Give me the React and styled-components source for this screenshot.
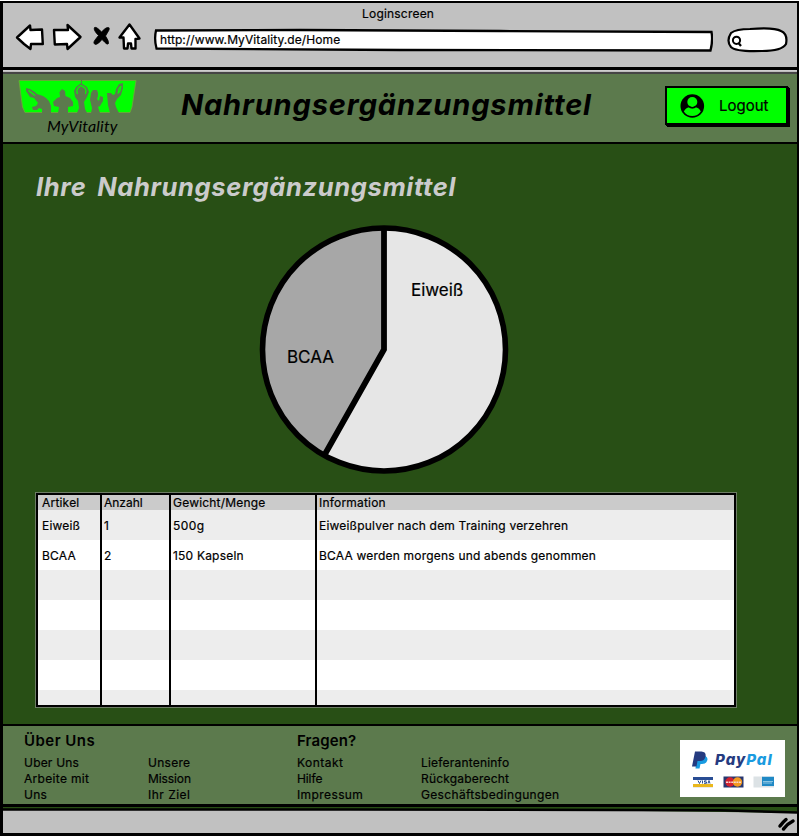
import React from 'react';
import styled, { createGlobalStyle } from 'styled-components';

const GlobalStyle = createGlobalStyle`
  * { box-sizing: border-box; }
  body { margin: 0; background: #fff; font-family: Inter, "Open Sans", sans-serif; color: #000; }
  svg { display: block; }
`;

const Window = styled.div`
  width: 799px;
  height: 835px;
  margin-top: 1px;
  display: flex;
  flex-direction: column;
  border: solid #000;
  border-width: 2px 2px 3px 3px;
`;

const Label = styled.span`
  font-size: ${(p) => p.$size || 12}px;
  font-weight: 400;
  letter-spacing: ${(p) => p.$ls ?? 0.2}px;
  line-height: 16px;
  white-space: pre;
  -webkit-text-stroke: 0.2px currentColor;
`;

const Chrome = styled.header`
  flex: 0 0 67px;
  background: #c1c1c1;
  border-bottom: 3px solid #000;
`;

const WindowTitle = styled.div`
  height: 18px;
  padding: 3px 0 0 359px;
  display: flex;
`;

const Toolbar = styled.div`
  height: 42px;
  padding-left: 12px;
  display: flex;
`;

const AddressBar = styled.div`
  position: relative;
  width: 560px;
  height: 24px;
  margin: 7px 0 0 9px;
  padding: 4px 0 0 7px;
  display: flex;
`;

const BarOutline = styled.svg`
  position: absolute;
  inset: 0;
`;

const AddressText = styled(Label)`
  position: relative;
`;

const SearchField = styled.svg`
  margin: 5px 0 0 14px;
`;

const Gap = styled.div`
  flex: 0 0 2px;
  background: linear-gradient(#cfcfcf 1px, #bdbdbd 1px);
`;

const Brand = styled.div`
  flex: 0 0 72px;
  display: flex;
  background: #5c7a4d;
  border-top: 2px solid #454545;
  border-bottom: 2px solid #000;
  padding: 0 9px 0 15px;
`;

const Logo = styled.div`
  width: 120px;
  padding-top: 5px;
`;

const LogoName = styled.div`
  font-family: Lato, sans-serif;
  font-size: 16px;
  font-style: italic;
  line-height: 18px;
  letter-spacing: 0.15px;
  padding-left: 29px;
  margin-top: 3px;
`;

const Title = styled.h1`
  margin: ${(p) => p.$margin};
  font-size: ${(p) => p.$size}px;
  line-height: 36px;
  font-style: italic;
  font-weight: 700;
  letter-spacing: ${(p) => p.$ls}px;
  word-spacing: ${(p) => p.$ws || 0}px;
  color: ${(p) => p.$color || '#000'};
  white-space: nowrap;
`;

const LogoutButton = styled.button`
  width: 123px;
  height: 39px;
  margin: 12px 0 0 auto;
  padding: 0 0 0 13px;
  display: flex;
  align-items: center;
  gap: 14px;
  background: #00ff00;
  border: 2px solid #000;
  box-shadow: 1px 1px #000, 2px 2px #000;
  font-family: inherit;
  color: #000;
`;

const Content = styled.main`
  flex: 0 0 580px;
  background: #284f15;
  padding: 25px 0 0 33px;
`;

const ChartArea = styled.div`
  position: relative;
  width: 252px;
  height: 252px;
  margin: 18px 0 0 222px;
`;

const SliceLabel = styled(Label)`
  position: absolute;
  left: ${(p) => p.$x}px;
  top: ${(p) => p.$y}px;
`;

const Table = styled.div`
  position: relative;
  width: 702px;
  height: 216px;
  margin: 17px 0 0 -1px;
  border: 1px solid #6d7c65;
  box-shadow: inset 0 0 0 2px #000;
  padding: 2px;
  background: repeating-linear-gradient(#ededed 0 30px, #fff 30px 60px) 0 17px;
`;

const Row = styled.div`
  display: grid;
  grid-template-columns: 62px 69px 146px 1fr;
  align-items: ${(p) => (p.$head ? 'start' : 'center')};
  height: ${(p) => (p.$head ? 15 : 30)}px;
  padding: ${(p) => (p.$head ? 0 : 2)}px 0 0 4px;
  background: ${(p) => (p.$head ? '#cbcbcb' : 'transparent')};
`;

const Divider = styled.i`
  position: absolute;
  top: 2px;
  bottom: 1px;
  left: ${(p) => p.$x}px;
  width: 2px;
  background: #000;
`;

const Footer = styled.footer`
  flex: 0 0 83px;
  background: #5c7a4d;
  border-top: 2px solid #000;
  border-bottom: 3px solid #000;
  padding: 6px 12px 0 21px;
  display: flex;
`;

const LinkGroup = styled.section`
  width: 273px;
  padding-top: 1px;
`;

const LinkColumns = styled.div`
  display: grid;
  grid-template-columns: 124px auto;
  margin-top: 6px;
`;

const LinkList = styled.div`
  display: flex;
  flex-direction: column;
`;

const Heading = styled.h2`
  margin: 0;
  font-size: 15px;
  font-weight: 600;
  line-height: 16px;
  letter-spacing: ${(p) => p.$ls}px;
`;

const PaymentBox = styled.div`
  width: 105px;
  height: 57px;
  margin: 8px 0 0 auto;
  padding: 10px 0 0 12px;
  background: #fff;
`;

const PayPalRow = styled.div`
  display: flex;
  align-items: center;
  height: 19px;
  margin-bottom: 7px;
`;

const PayPalName = styled.div`
  font: italic 800 15px/20px Inter, sans-serif;
  letter-spacing: 1px;
  color: #253b80;
  padding: 1px 0 0 7px;
  span { color: #1a9be0; }
`;

const Strip = styled.div`
  flex: 0 0 26px;
  background: #284f15;
  display: flex;
`;

const Arrow = ({ d }) => <path d={d} fill="#fff" stroke="#000" strokeWidth="2.4" strokeLinejoin="round" />;

const NavIcons = () => (
  <svg width="129" height="34" viewBox="15 21 129 34">
    <Arrow d="M17 37.5 30 25.5 30.5 30 42 29.5 42.8 44 31 44 30.5 49 24 44Z" />
    <Arrow d="M54 30 68 30 67.5 25 80.5 37 67.5 49 67 44 54.8 44.5Z" />
    <path d="M94.500 27.500Q93 30 98.500 35.500L95 40Q92.500 43.500 95.500 44.500Q98 44.500 102 39.500L104.500 42Q107.500 45.500 108.500 43.500Q109 41 105.500 36L109 30Q110 27 107.500 27.500Q105.500 27.500 101.500 32Q96.500 26.500 94.500 27.500Z" fill="#000" stroke="#000" strokeWidth="0.8" />
    <Arrow d="M129.500 24.500 119.500 37.500 123.500 37.500 124 48.500 127.500 48.500 128 43.500 131 43.500 131.500 48.500 135.500 48.500 135.500 39 139.500 38.500Z" />
  </svg>
);

const LogoArt = () => (
  <svg width="120" height="35" viewBox="18 79 120 35">
    <path d="M19 80.500H136L132 107 130 112.500H25L22.500 107Z" fill="#00ff00" stroke="#71a63b" strokeWidth="0.8" />
    <g fill="#5c7a4d">
      <path d="M42 113 42 109 39 108 37 110 33 110 32 107 36 106 38 103 34 98 30 97 26 91 26 88 30 89 35 92 37 94 40 95 43 96 46 98 49 101 51 106 51 113Z" />
      <path d="M58 113 59 107 54 106 53 102 57 98 60 97 59.500 92 62 89 65 91 65.500 96 70 98 73 102 73 106 68 107 68 113Z" />
      <path d="M77 113 79 108 78 101 75 97 74 91 76 87 81 83 87 87 89 92 87 97 84 102 85 109 87 113Z" />
      <path d="M91 113 92 108 90 100 91 93 93 90 97 90 98 93 98 96 97 99 99 101 100 96 103 97 103 101 100 106 98 107 100 113Z" />
      <path d="M107 93 111 93 113 95 115 94 116 89 119 84 123 83 123 88 121 95 117 99 115 103 116 107 119 113 110 113 108 105Z" />
    </g>
    <path d="M28.500 90.500 35 95.500M77.500 94Q76 91 78 88L81 85.500 85 88Q87 91 85 94M118 93.500 119 88.500 121 86 120 91Z" fill="none" stroke="#00ff00" strokeWidth="1.200" />
    <circle cx="81.500" cy="93.500" r="3.500" fill="#5c7a4d" />
    <path d="M81.500 80V84" stroke="#5c7a4d" />
  </svg>
);

const UserIcon = () => (
  <svg width="25" height="24" viewBox="0 0 25 24">
    <circle cx="12.300" cy="12" r="11.800" />
    <circle cx="12.300" cy="8" r="5" fill="#0f0" />
    <path d="M3.800 17.500Q6 13.500 9 13.200Q12.300 15.200 15.600 13.200Q19 13.500 20.800 17.500Q17.500 22 12.300 22Q7 22 3.800 17.500Z" fill="#0f0" />
    <path d="M8.500 12Q12.300 16 16.200 12" fill="none" stroke="#000" strokeWidth="1.200" />
  </svg>
);

const PieChart = () => (
  <svg width="252" height="252" viewBox="258 223 252 252">
    <circle cx="384" cy="349.500" r="121.500" fill="#e6e6e6" />
    <path d="M384 349.500V228A121.500 121.500 0 0 0 324.500 455Z" fill="#a7a7a7" />
    <path d="M384 228V349.500L324.500 455" fill="none" stroke="#000" strokeWidth="5.800" />
    <circle cx="384" cy="349.500" r="121.500" fill="none" stroke="#000" strokeWidth="5.600" />
  </svg>
);

const PayPalMark = () => (
  <svg width="16" height="18" viewBox="0 0 16 18">
    <path d="M5 5H13.500Q16.500 7 15 10Q14 13 10 13H8.500L7.500 17.500H3.500Z" fill="#189be1" />
    <path d="M3 .5H9.500Q14.500 1 13.500 5.500Q12.500 10 8 10H5.500L4.500 15.500H0Z" fill="#253b80" />
  </svg>
);

const Cards = () => (
  <svg width="83" height="12" viewBox="0 0 83 12">
    <path d="M1 1H21V11.500H1Z" fill="#d5d5d5" />
    <path d="M1 1H21V4H1Z" fill="#294d93" />
    <path d="M1 8H21V11H1Z" fill="#eab71c" />
    <path d="M1 4H21V8H1Z" fill="#fff" />
    <path d="M6 4.500 7.500 7.500 9 4.500M10.500 4.500V7.500M14.500 4.800H12.500V6H14.500V7.300H12M16 7.500 17 4.500 18 7.500" fill="none" stroke="#294d93" />
    <rect x="31.500" y=".5" width="20" height="11" fill="#28366f" />
    <circle cx="38" cy="6" r="4.700" fill="#d3202e" />
    <circle cx="45.500" cy="6" r="4.700" fill="#f39a20" />
    <path d="M34 6.300H49" stroke="#f6d5ce" strokeWidth="1.500" strokeDasharray="2 .6" />
    <rect x="61.500" y=".5" width="20.500" height="11" fill="#dce2e5" />
    <path d="M70 .8H82V10H70Z" fill="#2089c5" />
    <path d="M71 5.500H81M71 7H80" stroke="#a6d4ea" strokeWidth=".8" />
  </svg>
);

const Status = () => (
  <svg width="794" height="26" viewBox="3 807 794 26">
    <path d="M3 810H560L797 813V835H3Z" fill="#c1c1c1" />
    <path d="M3 809.500H350L720 810.200 797 812.500" fill="none" stroke="#000" strokeWidth="2.500" />
    <path d="M780 826Q783 822 786 819.500M783.500 829Q787 824 793 821" fill="none" stroke="#000" strokeWidth="3.500" strokeLinecap="round" />
  </svg>
);

const head = [['Artikel'], ['Anzahl', 0], ['Gewicht/Menge'], ['Information']];
const rows = [
  [['Eiweiß'], ['1'], ['500g', 0.4], ['Eiweißpulver nach dem Training verzehren']],
  [['BCAA'], ['2'], ['150 Kapseln'], ['BCAA werden morgens und abends genommen']],
];

const links = {
  about: [['Uber Uns'], ['Arbeite mit', 0.32], ['Uns', 0.3]],
  mission: [['Unsere', 0.26], ['Mission', -0.1], ['Ihr Ziel', 0.49]],
  help: [['Kontakt', 0.48], ['Hilfe', -0.1], ['Impressum', 0.4]],
  legal: [['Lieferanteninfo'], ['Rückgaberecht'], ['Geschäftsbedingungen', 0.33]],
};

const Cells = ({ items }) => items.map(([t, ls]) => <Label key={t} $ls={ls}>{t}</Label>);

const Links = ({ items }) => (
  <LinkList><Cells items={items} /></LinkList>
);

export default function App() {
  return (
    <>
      <GlobalStyle />
      <Window>
        <Chrome>
          <WindowTitle><Label>Loginscreen</Label></WindowTitle>
          <Toolbar>
            <NavIcons />
            <AddressBar>
              <BarOutline width="560" height="24" viewBox="153 29 560 24">
                <path d="M156 31.500 300 31 500 32 711.500 33Q713 42 710.500 51.500L400 51 156.500 49.500Q154 40 156 31.500Z" fill="#fff" stroke="#000" strokeWidth="2.300" />
              </BarOutline>
              <AddressText $ls={0.09}>http://www.MyVitality.de/Home</AddressText>
            </AddressBar>
            <SearchField width="62" height="28" viewBox="727 27 62 28">
              <path d="M731 34Q736 30 750 30Q774 28 781 32Q788 35 786 45Q782 52 762 52Q736 53 731 48Q726 42 731 34Z" fill="#fff" stroke="#000" strokeWidth="2.200" />
              <circle cx="736.500" cy="41.300" r="3.600" fill="none" stroke="#000" strokeWidth="2" />
              <path d="M738.500 44 741 47" stroke="#000" strokeWidth="2.200" />
            </SearchField>
          </Toolbar>
        </Chrome>
        <Gap />
        <Brand>
          <Logo>
            <LogoArt />
            <LogoName>MyVitality</LogoName>
          </Logo>
          <Title $size={29} $ls={0.85} $margin="13px 0 0 43px">Nahrungsergänzungsmittel</Title>
          <LogoutButton>
            <UserIcon />
            <Label $size={15} $ls={0}>Logout</Label>
          </LogoutButton>
        </Brand>
        <Content>
          <Title as="h2" $size={25.5} $ls={0.65} $ws={4} $color="#cbcbcb" $margin="0">Ihre Nahrungsergänzungsmittel</Title>
          <ChartArea>
            <PieChart />
            <SliceLabel $size={17} $ls={-0.05} $x={153} $y={59}>Eiweiß</SliceLabel>
            <SliceLabel $size={17} $ls={0} $x={29} $y={126}>BCAA</SliceLabel>
          </ChartArea>
          <Table>
            <Row $head><Cells items={head} /></Row>
            {rows.map((r) => <Row key={r[0][0]}><Cells items={r} /></Row>)}
            <Divider $x={64} />
            <Divider $x={133} />
            <Divider $x={279} />
          </Table>
        </Content>
        <Footer>
          <LinkGroup>
            <Heading $ls={0.46}>Über Uns</Heading>
            <LinkColumns><Links items={links.about} /><Links items={links.mission} /></LinkColumns>
          </LinkGroup>
          <LinkGroup>
            <Heading $ls={0.1}>Fragen?</Heading>
            <LinkColumns><Links items={links.help} /><Links items={links.legal} /></LinkColumns>
          </LinkGroup>
          <PaymentBox>
            <PayPalRow>
              <PayPalMark />
              <PayPalName>Pay<span>Pal</span></PayPalName>
            </PayPalRow>
            <Cards />
          </PaymentBox>
        </Footer>
        <Strip><Status /></Strip>
      </Window>
    </>
  );
}
